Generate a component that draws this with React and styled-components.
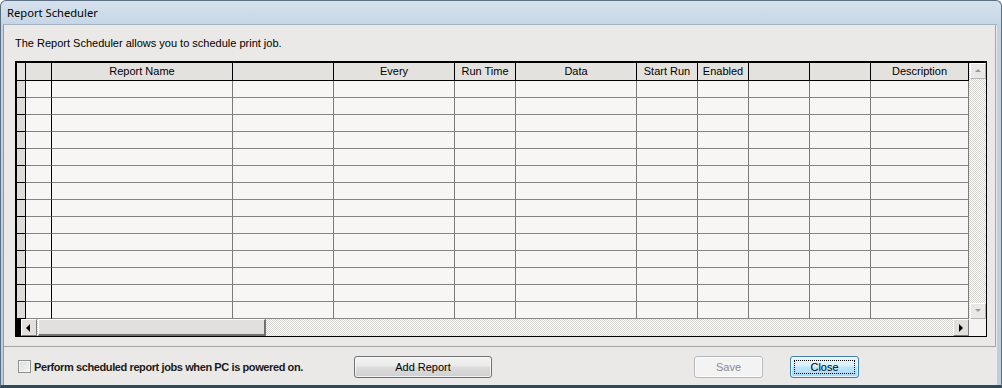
import React from 'react';
import styled, { createGlobalStyle } from 'styled-components';

const Global = createGlobalStyle`
  html, body { margin: 0; padding: 0; background: #ffffff; }
  body { font-family: "Liberation Sans", Arial, sans-serif; }
  #root { width: 1002px; height: 388px; }
`;

const COLS = [9, 26, 181, 101, 121, 61, 121, 61, 51, 61, 61, 98];
const TEMPLATE = COLS.map((c) => `${c}px`).join(' ');
const HEADERS = ['', '', 'Report Name', '', 'Every', 'Run Time', 'Data', 'Start Run', 'Enabled', '', '', 'Description'];
const ROWS = 14;

const Window = styled.div`
  width: 1002px;
  height: 388px;
  box-sizing: border-box;
  display: flex;
  flex-direction: column;
  background: linear-gradient(#d6e1ee, #c2d2e3 30px, #bccde0);
  border: 1px solid #5c6f82;
  border-bottom: 3px solid #2c4a5b;
  border-radius: 6px 6px 0 0;
  padding: 0 4px 0 2px;
  overflow: hidden;
`;

const TitleBar = styled.div`
  height: 23px;
  flex: none;
  display: flex;
  align-items: center;
  padding-left: 4px;
  font-family: "Noto Sans", "Liberation Sans", Arial, sans-serif;
  font-size: 11.2px;
  color: #000;
`;

const Body = styled.div`
  flex: 1;
  display: flex;
  flex-direction: column;
  background: #ebe9e7;
  border-left: 1px solid #8d9cab;
  border-top: 1px solid #a3b3c4;
`;

const Panel = styled.div`
  padding: 12px 0 9px 11px;
  border-right: 1px solid #a4a4a4;
  border-bottom: 1px solid #a4a4a4;
  margin-right: 1px;
`;

const Intro = styled.div`
  font-size: 11px;
  line-height: 13px;
  color: #000;
  margin-bottom: 11px;
`;

const Grid = styled.div`
  width: 972px;
  box-sizing: border-box;
  border-top: 2px solid #000;
  border-left: 2px solid #000;
  border-right: 1px solid #000;
  border-bottom: 1px solid #000;
  display: grid;
  grid-template-columns: 952px 17px;
  grid-template-rows: 18px 238px 17px;
  background: #ecebe9;
`;

const HeaderRow = styled.div`
  display: grid;
  grid-template-columns: ${TEMPLATE};
  grid-column: 1;
  grid-row: 1;
`;

const HeaderCell = styled.div`
  box-sizing: border-box;
  background: #e4e2df;
  border-right: 1px solid #000;
  border-bottom: 1px solid #000;
  font-size: 11px;
  line-height: 17px;
  text-align: center;
  color: #000;
  white-space: nowrap;
  overflow: hidden;
`;

const Rows = styled.div`
  grid-column: 1;
  grid-row: 2;
  overflow: hidden;
`;

const DataRow = styled.div`
  display: grid;
  grid-template-columns: ${TEMPLATE};
  height: 17px;
`;

const Cell = styled.div`
  box-sizing: border-box;
  background: ${(p) => (p.$indicator ? '#dedcd9' : '#f8f6f4')};
  border-right: 1px solid ${(p) => (p.$strong ? '#000' : '#7a7a7a')};
  border-bottom: 1px solid ${(p) => (p.$indicator ? '#000' : '#858585')};
`;

const VScroll = styled.div`
  grid-column: 2;
  grid-row: 1 / span 2;
  display: flex;
  flex-direction: column;
  justify-content: space-between;
  background: repeating-conic-gradient(#ffffff 0 25%, #d6d4d0 0 50%) 0 0 / 2px 2px;
`;

const HScroll = styled.div`
  grid-column: 1;
  grid-row: 3;
  display: flex;
  background: repeating-conic-gradient(#ffffff 0 25%, #d6d4d0 0 50%) 0 0 / 2px 2px;
`;

const FrozenBlock = styled.div`
  width: 4px;
  flex: none;
  background: #000;
`;

const ScrollButton = styled.div`
  width: 16px;
  height: ${(p) => (p.$vertical ? '16px' : '17px')};
  box-sizing: border-box;
  flex: none;
  display: flex;
  align-items: center;
  justify-content: center;
  background: ${(p) => (p.$vertical ? '#e9e8e6' : '#e2e0dc')};
  border-top: 1px solid #ffffff;
  border-left: 1px solid #ffffff;
  border-right: 1px solid ${(p) => (p.$vertical ? '#b5b5b5' : '#7b7b7b')};
  border-bottom: 1px solid ${(p) => (p.$vertical ? '#b5b5b5' : '#7b7b7b')};
  margin-left: ${(p) => (p.$vertical ? '1px' : '0')};
`;

const Thumb = styled.div`
  width: 228px;
  flex: none;
  box-sizing: border-box;
  background: #e2e0dc;
  border-top: 1px solid #ffffff;
  border-left: 1px solid #ffffff;
  border-right: 2px solid #707070;
  border-bottom: 2px solid #707070;
  margin-left: 1px;
`;

const Spacer = styled.div`
  flex: 1;
`;

const Corner = styled.div`
  grid-column: 2;
  grid-row: 3;
  background: #f4f3f2;
`;

const Footer = styled.div`
  flex: 1;
  display: flex;
  align-items: center;
  padding: 1px 0 0 14px;
`;

const CheckGroup = styled.label`
  width: 336px;
  flex: none;
  display: flex;
  align-items: center;
  gap: 3px;
`;

const CheckBox = styled.span`
  width: 13px;
  height: 13px;
  box-sizing: border-box;
  border: 1px solid #8e8f8f;
  background: linear-gradient(135deg, #dcdcdc, #f6f6f6);
  box-shadow: inset 0 0 0 1px #f4f4f4;
`;

const CheckLabel = styled.span`
  font-size: 11px;
  font-weight: bold;
  letter-spacing: -0.4px;
  color: #1a1a1a;
  white-space: nowrap;
`;

const Button = styled.button`
  width: ${(p) => p.$width}px;
  height: 22px;
  flex: none;
  box-sizing: border-box;
  margin: 0 0 0 ${(p) => p.$gap || 0}px;
  padding: 0;
  font-family: "Liberation Sans", Arial, sans-serif;
  font-size: 11px;
  border-radius: 3px;
  position: relative;
  color: ${(p) => (p.$variant === 'disabled' ? '#8a8a8a' : '#000')};
  border: 1px solid
    ${(p) => (p.$variant === 'disabled' ? '#b5b8ba' : p.$variant === 'focus' ? '#3c7fb1' : '#707070')};
  background: ${(p) =>
    p.$variant === 'disabled'
      ? '#f3f3f3'
      : p.$variant === 'focus'
      ? 'linear-gradient(#eaf6fd 0%, #d9f0fc 45%, #bee6fd 50%, #a7d9f5 100%)'
      : 'linear-gradient(#f2f2f2 0%, #ebebeb 45%, #dddddd 50%, #cfcfcf 100%)'};
  box-shadow: inset 0 0 0 1px rgba(255, 255, 255, 0.7);
`;

const FocusRing = styled.span`
  position: absolute;
  inset: 3px;
  border: 1px dotted #000;
  display: flex;
  align-items: center;
  justify-content: center;
`;

const Arrow = ({ dir, color }) => {
  const pts = {
    up: '1,5 4,2 7,5',
    down: '1,2 4,5 7,2',
    left: '5,0 5,8 1,4',
    right: '2,0 2,8 6,4',
  }[dir];
  return (
    <svg width="8" height="8" viewBox="0 0 8 8">
      <polygon points={pts} fill={color} />
    </svg>
  );
};

export default function App() {
  return (
    <>
      <Global />
      <Window>
        <TitleBar>Report Scheduler</TitleBar>
        <Body>
          <Panel>
            <Intro>The Report Scheduler allows you to schedule print job.</Intro>
            <Grid>
              <HeaderRow>
                {HEADERS.map((h, i) => (
                  <HeaderCell key={i}>{h}</HeaderCell>
                ))}
              </HeaderRow>
              <Rows>
                {Array.from({ length: ROWS }).map((_, r) => (
                  <DataRow key={r}>
                    {COLS.map((_, c) => (
                      <Cell key={c} $indicator={c === 0} $strong={c <= 1} />
                    ))}
                  </DataRow>
                ))}
              </Rows>
              <VScroll>
                <ScrollButton $vertical>
                  <Arrow dir="up" color="#9a9a9a" />
                </ScrollButton>
                <ScrollButton $vertical>
                  <Arrow dir="down" color="#9a9a9a" />
                </ScrollButton>
              </VScroll>
              <HScroll>
                <FrozenBlock />
                <ScrollButton>
                  <Arrow dir="left" color="#000" />
                </ScrollButton>
                <Thumb />
                <Spacer />
                <ScrollButton>
                  <Arrow dir="right" color="#000" />
                </ScrollButton>
              </HScroll>
              <Corner />
            </Grid>
          </Panel>
          <Footer>
            <CheckGroup>
              <CheckBox />
              <CheckLabel>Perform scheduled report jobs when PC is powered on.</CheckLabel>
            </CheckGroup>
            <Button $width={138}>Add Report</Button>
            <Button $width={69} $gap={202} $variant="disabled" disabled>
              Save
            </Button>
            <Button $width={69} $gap={27} $variant="focus">
              <FocusRing>Close</FocusRing>
            </Button>
          </Footer>
        </Body>
      </Window>
    </>
  );
}
